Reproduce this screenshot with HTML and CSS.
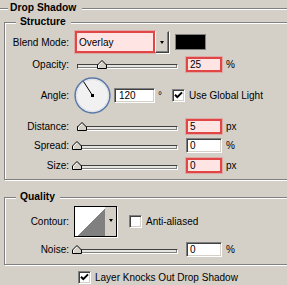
FILE: index.html
```html
<!doctype html>
<html lang="en">
<head>
    <meta charset="utf-8">
    <meta name="viewport" content="width=device-width, initial-scale=1">
    <title>Drop Shadow</title>
    <link rel="stylesheet" href="styles.css">
</head>
<body>
    <main class="panel">
        <div class="title"><span>Drop Shadow</span></div>

        <fieldset class="group">
            <legend>Structure</legend>

            <div class="row row-blend">
                <span class="label">Blend Mode:</span>
                <div class="select">
                    <span class="select-text">Overlay</span>
                    <span class="select-btn"><i class="arrow"></i></span>
                </div>
                <span class="swatch"></span>
            </div>

            <div class="row row-gap4">
                <span class="label">Opacity:</span>
                <div class="slider">
                    <div class="track"></div>
                    <svg class="thumb" style="left: 20px" width="10" height="9" viewBox="0 0 10 9">
                        <polygon points="0.5,8.5 0.5,5 5,0.5 9.5,5 9.5,8.5" fill="#d4d0c8" stroke="#000"/>
                        <polyline points="1.5,8 1.5,5.4 5,1.9" fill="none" stroke="#fff"/>
                    </svg>
                </div>
                <span class="field hl">25</span>
                <span class="unit">%</span>
            </div>

            <div class="row row-angle">
                <span class="label">Angle:</span>
                <svg class="dial" width="37" height="37" viewBox="0 0 37 37">
                    <circle cx="18.5" cy="18.5" r="17.4" fill="#f1f1f1" stroke="#5a78a8" stroke-width="1.5"/>
                    <circle cx="18.5" cy="18.5" r="16.1" fill="none" stroke="#d9dde4" stroke-width="1"/>
                    <line x1="18.5" y1="18.5" x2="9.5" y2="4.5" stroke="#000" stroke-width="1"/>
                    <rect x="17" y="17" width="3" height="3" fill="#000"/>
                </svg>
                <span class="field field-angle">120</span>
                <span class="deg">°</span>
                <span class="check checked">
                    <svg width="9" height="9" viewBox="0 0 9 9"><path d="M1 3.8 L3.3 6.1 L8 1.4" fill="none" stroke="#000" stroke-width="2"/></svg>
                </span>
                <span class="check-text">Use Global Light</span>
            </div>

            <div class="row">
                <span class="label">Distance:</span>
                <div class="slider">
                    <div class="track"></div>
                    <svg class="thumb" style="left: 0px" width="10" height="9" viewBox="0 0 10 9">
                        <polygon points="0.5,8.5 0.5,5 5,0.5 9.5,5 9.5,8.5" fill="#d4d0c8" stroke="#000"/>
                        <polyline points="1.5,8 1.5,5.4 5,1.9" fill="none" stroke="#fff"/>
                    </svg>
                </div>
                <span class="field hl">5</span>
                <span class="unit">px</span>
            </div>

            <div class="row row-gap4">
                <span class="label">Spread:</span>
                <div class="slider">
                    <div class="track"></div>
                    <svg class="thumb" style="left: -5px" width="10" height="9" viewBox="0 0 10 9">
                        <polygon points="0.5,8.5 0.5,5 5,0.5 9.5,5 9.5,8.5" fill="#d4d0c8" stroke="#000"/>
                        <polyline points="1.5,8 1.5,5.4 5,1.9" fill="none" stroke="#fff"/>
                    </svg>
                </div>
                <span class="field">0</span>
                <span class="unit">%</span>
            </div>

            <div class="row">
                <span class="label">Size:</span>
                <div class="slider">
                    <div class="track"></div>
                    <svg class="thumb" style="left: -5px" width="10" height="9" viewBox="0 0 10 9">
                        <polygon points="0.5,8.5 0.5,5 5,0.5 9.5,5 9.5,8.5" fill="#d4d0c8" stroke="#000"/>
                        <polyline points="1.5,8 1.5,5.4 5,1.9" fill="none" stroke="#fff"/>
                    </svg>
                </div>
                <span class="field hl">0</span>
                <span class="unit">px</span>
            </div>
        </fieldset>

        <fieldset class="group group-quality">
            <legend>Quality</legend>

            <div class="row row-contour">
                <span class="label">Contour:</span>
                <div class="contour">
                    <svg class="contour-preview" width="30" height="29" viewBox="0 0 30 29" shape-rendering="crispEdges">
                        <rect width="30" height="29" fill="#fff"/>
                        <polygon points="2,29 30,1 30,29" fill="#808080"/>
                    </svg>
                    <span class="contour-btn"><i class="arrow"></i></span>
                </div>
                <span class="check check-aa"></span>
                <span class="check-text">Anti-aliased</span>
            </div>

            <div class="row">
                <span class="label">Noise:</span>
                <div class="slider">
                    <div class="track"></div>
                    <svg class="thumb" style="left: -5px" width="10" height="9" viewBox="0 0 10 9">
                        <polygon points="0.5,8.5 0.5,5 5,0.5 9.5,5 9.5,8.5" fill="#d4d0c8" stroke="#000"/>
                        <polyline points="1.5,8 1.5,5.4 5,1.9" fill="none" stroke="#fff"/>
                    </svg>
                </div>
                <span class="field">0</span>
                <span class="unit">%</span>
            </div>
        </fieldset>

        <div class="row row-knock">
            <span class="check checked">
                <svg width="9" height="9" viewBox="0 0 9 9"><path d="M1 3.8 L3.3 6.1 L8 1.4" fill="none" stroke="#000" stroke-width="2"/></svg>
            </span>
            <span class="check-text">Layer Knocks Out Drop Shadow</span>
        </div>
    </main>
</body>
</html>
```

FILE: styles.css
```css
/*
 * Reset
 */

*,
*::before,
*::after {
    box-sizing: border-box;
    margin: 0;
    padding: 0;
}

body {
    background-color: #d4d0c8;
    color: #000;
    font-family: "Liberation Sans", Arial, sans-serif;
    font-size: 10px;
    overflow: hidden;
}

/* the group boxes run on past the right edge, so clip them here */
.panel {
    overflow: hidden;
}

/*
 * Section title with etched rule
 */

.title {
    display: flex;
    font-size: 10.3px;
    font-weight: bold;
    height: 16px;
    line-height: 16px;
}

.title::before,
.title::after {
    border-bottom: 1px solid #fff;
    border-top: 1px solid #808080;
    content: "";
    height: 2px;
    margin-top: 8px;
}

.title::before {
    width: 8px;
}

.title::after {
    flex: 1;
}

.title span {
    padding: 0 6px 0 2px;
}

/*
 * Group boxes
 */

.group {
    border: 1px solid #808080;
    box-shadow: inset 1px 1px 0 #fff, 1px 1px 0 #fff;
    margin-left: 4px;
    min-width: 0;
    padding: 0 0 6px;
    width: 300px;
}

.group legend {
    background-color: #d4d0c8;
    font-size: 10.3px;
    font-weight: bold;
    line-height: 12px;
    margin-left: 11px;
    padding: 0 5px 0 4px;
}

.group-quality {
    margin-top: 11px;
    padding-bottom: 7px;
}

/*
 * Rows
 */

.row {
    align-items: center;
    display: flex;
    margin-top: 5px;
}

.row-gap4 {
    margin-top: 4px;
}

.row-blend {
    height: 22px;
    margin-top: 3px;
}

.row-contour {
    margin-top: 3px;
}

.row-knock {
    margin-top: 6px;
    padding-left: 78px;
}

.label {
    margin-right: 5px;
    text-align: right;
    width: 64px;
}

/*
 * Blend mode select
 */

.select {
    display: flex;
    height: 22px;
    margin-left: 1px;
}

.select-text {
    align-items: center;
    background-color: #ffe4e4;
    border: 2px solid #e04646;
    box-shadow: 0 0 0 1px rgba(240, 120, 120, 0.45);
    display: flex;
    padding-left: 2px;
    width: 80px;
}

.select-btn,
.contour-btn {
    align-items: center;
    display: flex;
    justify-content: center;
}

.select-btn {
    border: 1px solid;
    border-color: #d4d0c8 #404040 #404040 #fff;
    box-shadow: inset -1px -1px 0 #808080, 1px 1px 0 #fff;
    width: 14px;
}

.arrow {
    border-left: 2px solid transparent;
    border-right: 2px solid transparent;
    border-top: 3px solid #000;
    height: 0;
    width: 1px;
}

.swatch {
    background-color: #000;
    border: 1px solid #808080;
    height: 16px;
    margin-left: 6px;
    width: 31px;
}

/*
 * Sliders and numeric fields
 */

.slider {
    align-items: flex-end;
    display: flex;
    height: 9px;
    margin-left: 3px;
    margin-right: 8px;
    position: relative;
    width: 101px;
}

.track {
    background-color: #e6e4df;
    border: 1px solid;
    border-color: #404040 #fff #fff #404040;
    box-shadow: inset -1px -1px 0 #808080;
    flex: 1;
    height: 5px;
}

.thumb {
    bottom: 0;
    position: absolute;
}

.field {
    align-items: center;
    background-color: #fff;
    border: 1px solid;
    border-color: #808080 #fff #fff #808080;
    box-shadow: inset 1px 1px 0 #404040, inset -1px -1px 0 #d4d0c8;
    display: flex;
    height: 15px;
    padding-left: 3px;
    width: 36px;
}

.field.hl {
    background-color: #ffe4e4;
    border: 2px solid #e04646;
    box-shadow: 0 0 0 1px rgba(240, 120, 120, 0.45);
    padding-left: 2px;
}

.unit {
    margin-left: 4px;
}

/*
 * Angle
 */

.dial {
    display: block;
}

.field-angle {
    margin-left: 3px;
    padding-left: 4px;
    width: 41px;
}

.deg {
    margin-left: 3px;
}

.check {
    align-items: center;
    background-color: #fff;
    border: 1px solid;
    border-color: #808080 #fff #fff #808080;
    box-shadow: inset 1px 1px 0 #404040, inset -1px -1px 0 #d4d0c8;
    display: flex;
    height: 13px;
    justify-content: center;
    width: 13px;
}

.row-angle .check {
    margin-left: 10px;
}

.check-text {
    margin-left: 4px;
}

/*
 * Contour
 */

.contour {
    border: 1px solid #000;
    box-shadow: 1px 1px 0 #fff;
    display: flex;
    height: 31px;
    width: 43px;
}

.contour-preview {
    display: block;
}

.contour-btn {
    flex: 1;
    padding-bottom: 3px;
}

.check-aa {
    margin-left: 12px;
}
```
